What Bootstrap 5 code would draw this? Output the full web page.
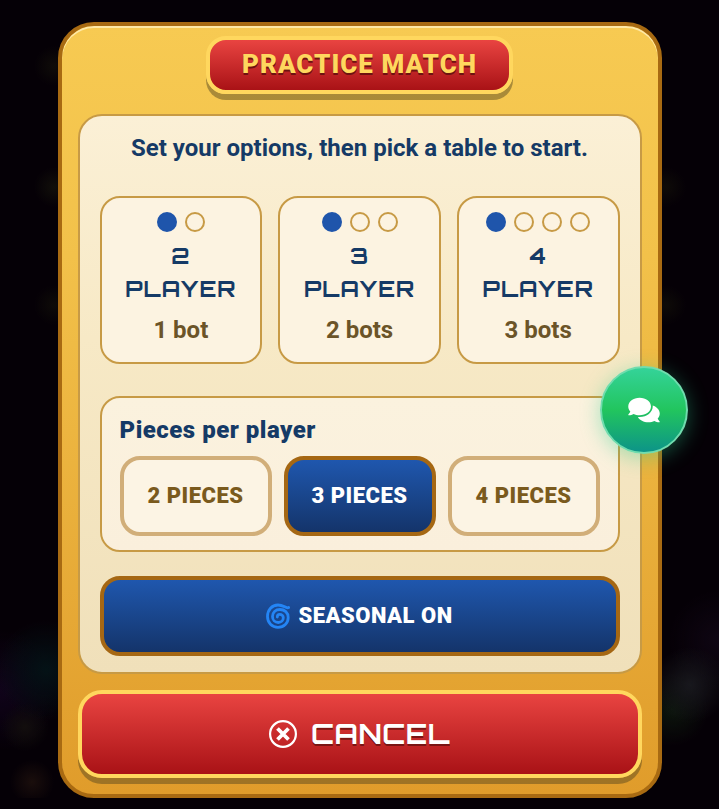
<!DOCTYPE html>
<html lang="en">
<head>
<meta charset="utf-8">
<meta name="viewport" content="width=device-width, initial-scale=1">
<title>Practice Match</title>
<link href="https://cdn.jsdelivr.net/npm/bootstrap@5.3.0/dist/css/bootstrap.min.css" rel="stylesheet">
<style>
  body {
    font-family: Roboto, "Liberation Sans", sans-serif;
    font-size: 24px;
    font-weight: 700;
    line-height: 32px;
    color: #153a66;
    background:
      radial-gradient(circle at 46px 670px, #041216, transparent 50px),
      radial-gradient(circle at 25px 727px, #120e0d, transparent 24px),
      radial-gradient(circle at 32px 782px, #1a0e0c, transparent 22px),
      radial-gradient(circle at 0 690px, #10031a, transparent 60px),
      radial-gradient(circle at 690px 685px, #18181d, transparent 38px),
      radial-gradient(circle at 672px 710px, #0c150c, transparent 36px),
      radial-gradient(circle at 719px 640px, #0f0613, transparent 50px),
      radial-gradient(circle at 54px 66px, #0f0c09, transparent 20px),
      radial-gradient(circle at 54px 187px, #110f0a, transparent 20px),
      radial-gradient(circle at 54px 305px, #0e0b08, transparent 20px),
      radial-gradient(circle at 666px 187px, #0e0b08, transparent 20px),
      radial-gradient(circle at 666px 305px, #0e0b08, transparent 20px),
      #050006;
  }
  .wide-face { font-family: Orbitron, "DejaVu Sans", sans-serif; }
  .match-dialog {
    max-width: 604px;
    margin-top: 22px;
    padding: 10px 16px 16px;
    border: 4px solid #a86a12;
    border-radius: 36px;
    background: linear-gradient(#f7ca52, #f2c14a 30%, #e09c2b);
    box-shadow: inset 0 2px 0 #ffe9a6;
  }
  .red-plate {
    color: #fff;
    border: 4px solid #ffd75e;
    background: linear-gradient(#e94441, #a91216);
    box-shadow: 0 6px 0 rgba(77, 65, 28, .45);
  }
  .title-plate {
    padding: 8px 32px 10px;
    border-radius: 20px;
    font-size: 26px;
    font-weight: 900;
    line-height: 32px;
    letter-spacing: 1px;
    color: #ffd75e;
    text-shadow: 0 2px 0 #6e1210;
  }
  .options-sheet {
    margin-top: 20px;
    padding: 16px 20px;
    border: 2px solid #c79a45;
    border-radius: 24px;
    background: linear-gradient(#fbf0d6, #f7e9c6 40%, #f0e0ba);
  }
  .table-grid { gap: 16px; margin-top: 32px; }
  .table-choice, .pieces-box {
    border: 2px solid #c79a45;
    border-radius: 20px;
    background: #fcf3e1;
  }
  .table-choice { padding: 14px 8px 16px; color: #153a66; font-weight: 700; }
  .seat-row { gap: 8px; margin-bottom: 7px; }
  .seat { width: 20px; height: 20px; border: 2px solid #c79a45; border-radius: 50%; }
  .seat-taken { border-color: #1f55ab; background: #1f55ab; }
  .player-name { font-size: 22px; line-height: 33px; letter-spacing: 1px; }
  .bot-count { margin-top: 9px; color: #6b5428; }
  .pieces-box { margin: 32px 0 24px; padding: 16px 18px 14px; background: linear-gradient(#fbf2de, #faefdc); }
  .pieces-title { font-size: 24px; line-height: 32px; letter-spacing: 0.5px; margin-bottom: 10px; font-weight: 900; }
  .pieces-grid { gap: 12px; }
  .option-btn {
    min-height: 80px;
    border: 4px solid #d1ae79;
    border-radius: 20px;
    background: #fcf4e4;
    color: #7a5a1d;
    font-size: 22px;
    font-weight: 900;
    letter-spacing: 0.5px;
  }
  .option-on { border-color: #a56713; background: linear-gradient(#1f57ae, #14346a); color: #fff; }
  .cancel-btn {
    min-height: 88px;
    margin-top: 16px;
    gap: 14px;
    border-radius: 24px;
    font-size: 28px;
    font-weight: 700;
    letter-spacing: 0.5px;
  }
  .cancel-btn span { text-shadow: 0 2px 0 #7a1514; }
  .chat-fab {
    top: 366px;
    right: 31px;
    width: 88px;
    height: 88px;
    border: 2px solid #70dcae;
    background: linear-gradient(#34d399, #22c55e 50%, #0d9488);
    box-shadow: 0 4px 20px rgba(40, 205, 140, .4);
  }
</style>
<script src="https://cdn.jsdelivr.net/npm/bootstrap@5.3.0/dist/js/bootstrap.bundle.min.js"></script>
</head>
<body>
<main class="match-dialog mx-auto" role="dialog" aria-labelledby="dialog-title">
  <div class="d-flex justify-content-center">
    <h1 id="dialog-title" class="red-plate title-plate mb-0">PRACTICE MATCH</h1>
  </div>
  <section class="options-sheet">
    <p class="text-center mb-0">Set your options, then pick a table to start.</p>
    <div class="table-grid d-flex">
      <button type="button" class="table-choice flex-fill w-100 text-center">
        <span class="seat-row d-flex justify-content-center"><span class="seat seat-taken"></span><span class="seat"></span></span>
        <span class="player-name wide-face d-block">2<br>PLAYER</span>
        <span class="bot-count d-block">1 bot</span>
      </button>
      <button type="button" class="table-choice flex-fill w-100 text-center">
        <span class="seat-row d-flex justify-content-center"><span class="seat seat-taken"></span><span class="seat"></span><span class="seat"></span></span>
        <span class="player-name wide-face d-block">3<br>PLAYER</span>
        <span class="bot-count d-block">2 bots</span>
      </button>
      <button type="button" class="table-choice flex-fill w-100 text-center">
        <span class="seat-row d-flex justify-content-center"><span class="seat seat-taken"></span><span class="seat"></span><span class="seat"></span><span class="seat"></span></span>
        <span class="player-name wide-face d-block">4<br>PLAYER</span>
        <span class="bot-count d-block">3 bots</span>
      </button>
    </div>
    <div class="pieces-box" role="group" aria-labelledby="pieces-title">
      <h2 id="pieces-title" class="pieces-title">Pieces per player</h2>
      <div class="pieces-grid d-flex">
        <button type="button" class="option-btn flex-fill w-100">2 PIECES</button>
        <button type="button" class="option-btn option-on flex-fill w-100" aria-pressed="true">3 PIECES</button>
        <button type="button" class="option-btn flex-fill w-100">4 PIECES</button>
      </div>
    </div>
    <button type="button" class="option-btn option-on w-100 d-flex align-items-center justify-content-center gap-2" aria-pressed="true">
      <svg width="24" height="26" viewBox="0 0 24 26" fill="none" stroke="#2485f5" stroke-linecap="round" aria-hidden="true">
        <path stroke-width="2.800" d="M22.600 4.500C20 6 18 2 12 2C6 2 1.500 7 1.500 13.500C1.500 20 6 24.300 12 24.300C18 24.300 22.200 20 22.200 14.500C22.200 9.500 18.500 6.500 14 6.500C9.500 6.500 6.500 9.500 6.500 13.500C6.500 17 9 19.500 12.300 19.500C15.300 19.500 17.300 17.300 17.300 14.800C17.300 12.500 15.500 11.300 13.800 11.300C12.200 11.300 11.300 12.500 11.300 14"/>
      </svg>
      <span>SEASONAL ON</span>
    </button>
  </section>
  <button type="button" class="red-plate cancel-btn wide-face w-100 d-flex align-items-center justify-content-center">
    <svg width="28" height="28" viewBox="0 0 28 28" fill="none" stroke="#fff" aria-hidden="true">
      <circle cx="14" cy="14" r="12.900" stroke-width="2.200"/>
      <path stroke-width="3.800" d="M8.500 8.500L19.500 19.500M19.500 8.500L8.500 19.500"/>
    </svg>
    <span>CANCEL</span>
  </button>
</main>
<button type="button" class="chat-fab position-fixed rounded-circle d-flex align-items-center justify-content-center p-0" aria-label="Chat">
  <svg width="32" height="28" viewBox="0 0 576 512" fill="#fff" aria-hidden="true"><path d="M416 192c0-88.400-93.100-160-208-160S0 103.600 0 192c0 34.300 14.100 65.900 38 92-13.400 30.200-35.500 54.200-35.800 54.500-2.200 2.300-2.800 5.700-1.500 8.700S4.800 352 8 352c36.600 0 66.900-12.300 88.700-25 32.200 15.700 70.300 25 111.300 25 114.900 0 208-71.600 208-160zm122 220c23.900-26 38-57.700 38-92 0-66.900-53.500-124.200-129.300-148.100.9 6.600 1.300 13.300 1.300 20.100 0 105.900-107.700 192-240 192-10.800 0-21.300-.8-31.700-1.900C207.800 439.600 281.800 480 368 480c41 0 79.100-9.200 111.300-25 21.800 12.700 52.100 25 88.700 25 3.200 0 6.100-1.900 7.300-4.800 1.300-2.900.7-6.300-1.500-8.700-.3-.3-22.400-24.200-35.800-54.500z"/></svg>
</button>
</body>
</html>
